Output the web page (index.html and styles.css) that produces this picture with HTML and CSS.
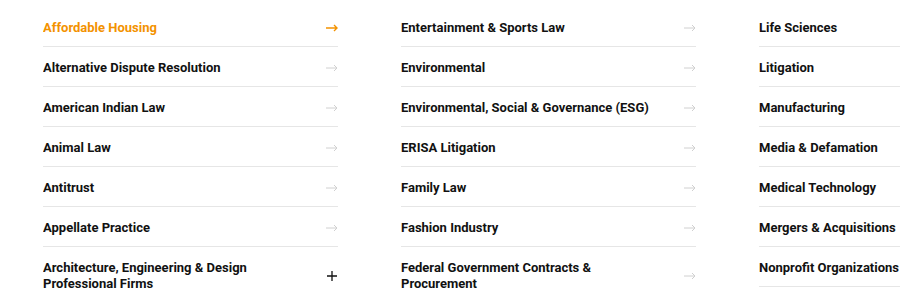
FILE: index.html
```html
<!DOCTYPE html>
<html lang="en">
<head>
    <meta charset="UTF-8">
    <meta name="viewport" content="width=device-width, initial-scale=1.0">
    <title>Practices</title>
    <link rel="stylesheet" href="styles.css">
</head>
<body>
    <div class="practiceGrid">
        <ul class="practiceList">
            <li class="item active"><a href="#">Affordable Housing</a><svg class="arrow" viewBox="0 0 12 8"><path d="M0 4H11M8 1L11 4L8 7"/></svg></li>
            <li class="item"><a href="#">Alternative Dispute Resolution</a><svg class="arrow" viewBox="0 0 12 8"><path d="M0 4H11M8 1L11 4L8 7"/></svg></li>
            <li class="item"><a href="#">American Indian Law</a><svg class="arrow" viewBox="0 0 12 8"><path d="M0 4H11M8 1L11 4L8 7"/></svg></li>
            <li class="item"><a href="#">Animal Law</a><svg class="arrow" viewBox="0 0 12 8"><path d="M0 4H11M8 1L11 4L8 7"/></svg></li>
            <li class="item"><a href="#">Antitrust</a><svg class="arrow" viewBox="0 0 12 8"><path d="M0 4H11M8 1L11 4L8 7"/></svg></li>
            <li class="item"><a href="#">Appellate Practice</a><svg class="arrow" viewBox="0 0 12 8"><path d="M0 4H11M8 1L11 4L8 7"/></svg></li>
            <li class="item"><a href="#">Architecture, Engineering &amp; Design<br>Professional Firms</a><svg class="plus" viewBox="0 0 10 10"><path d="M5 0V10M0 5H10"/></svg></li>
        </ul>
        <ul class="practiceList">
            <li class="item"><a href="#">Entertainment &amp; Sports Law</a><svg class="arrow" viewBox="0 0 12 8"><path d="M0 4H11M8 1L11 4L8 7"/></svg></li>
            <li class="item"><a href="#">Environmental</a><svg class="arrow" viewBox="0 0 12 8"><path d="M0 4H11M8 1L11 4L8 7"/></svg></li>
            <li class="item"><a href="#">Environmental, Social &amp; Governance (ESG)</a><svg class="arrow" viewBox="0 0 12 8"><path d="M0 4H11M8 1L11 4L8 7"/></svg></li>
            <li class="item"><a href="#">ERISA Litigation</a><svg class="arrow" viewBox="0 0 12 8"><path d="M0 4H11M8 1L11 4L8 7"/></svg></li>
            <li class="item"><a href="#">Family Law</a><svg class="arrow" viewBox="0 0 12 8"><path d="M0 4H11M8 1L11 4L8 7"/></svg></li>
            <li class="item"><a href="#">Fashion Industry</a><svg class="arrow" viewBox="0 0 12 8"><path d="M0 4H11M8 1L11 4L8 7"/></svg></li>
            <li class="item"><a href="#">Federal Government Contracts &amp;<br>Procurement</a><svg class="arrow" viewBox="0 0 12 8"><path d="M0 4H11M8 1L11 4L8 7"/></svg></li>
        </ul>
        <ul class="practiceList">
            <li class="item"><a href="#">Life Sciences</a><svg class="arrow" viewBox="0 0 12 8"><path d="M0 4H11M8 1L11 4L8 7"/></svg></li>
            <li class="item"><a href="#">Litigation</a><svg class="arrow" viewBox="0 0 12 8"><path d="M0 4H11M8 1L11 4L8 7"/></svg></li>
            <li class="item"><a href="#">Manufacturing</a><svg class="arrow" viewBox="0 0 12 8"><path d="M0 4H11M8 1L11 4L8 7"/></svg></li>
            <li class="item"><a href="#">Media &amp; Defamation</a><svg class="arrow" viewBox="0 0 12 8"><path d="M0 4H11M8 1L11 4L8 7"/></svg></li>
            <li class="item"><a href="#">Medical Technology</a><svg class="arrow" viewBox="0 0 12 8"><path d="M0 4H11M8 1L11 4L8 7"/></svg></li>
            <li class="item"><a href="#">Mergers &amp; Acquisitions</a><svg class="arrow" viewBox="0 0 12 8"><path d="M0 4H11M8 1L11 4L8 7"/></svg></li>
            <li class="item"><a href="#">Nonprofit Organizations</a><svg class="arrow" viewBox="0 0 12 8"><path d="M0 4H11M8 1L11 4L8 7"/></svg></li>
        </ul>
    </div>
</body>
</html>
```

FILE: styles.css
```css
body {
    margin: 0;
    font-family: Roboto, "Liberation Sans", sans-serif;
    background: #fff;
    overflow: hidden;
}

.practiceGrid {
    display: grid;
    grid-template-columns: repeat(3, 295px);
    column-gap: 63px;
    margin-left: 43px;
    padding-top: 7px;
    width: 857px;
    overflow: hidden;
}

.practiceList {
    list-style: none;
    margin: 0;
    padding: 0;
}

.item {
    display: flex;
    align-items: center;
    justify-content: space-between;
    padding: 13px 0 10px;
    border-bottom: 1px solid #e6e6e6;
}

.item a {
    color: #111;
    text-decoration: none;
    font-size: 13px;
    font-weight: 700;
    line-height: 16px;
}

.item.active a {
    color: #f39200;
}

.arrow {
    width: 12px;
    height: 8px;
    fill: none;
    stroke: #d0d0d0;
    stroke-width: 1;
}

.item.active .arrow {
    stroke: #f39200;
    stroke-width: 1.4;
}

.plus {
    width: 10px;
    height: 10px;
    margin-right: 1px;
    fill: none;
    stroke: #111;
    stroke-width: 1.3;
}
```
